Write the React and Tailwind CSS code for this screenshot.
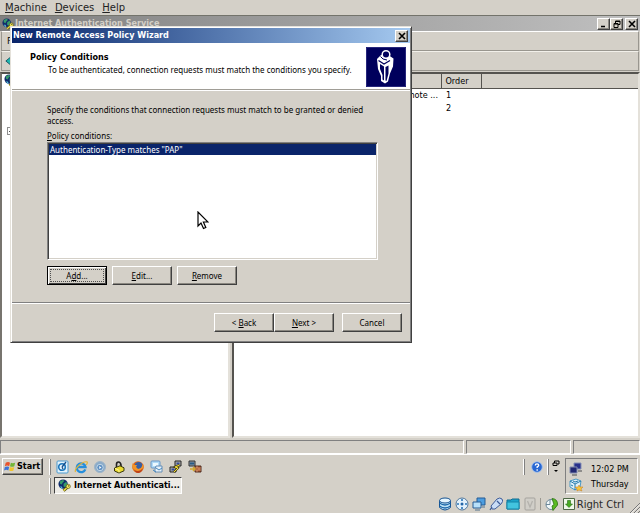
import React from "react";

const raised = "border border-t-white border-l-white border-r-[#404040] border-b-[#404040] shadow-[inset_-1px_-1px_0_#8a8780]";
const uiFont = "font-['DejaVu_Sans_Condensed','DejaVu_Sans',sans-serif]";
const dialogFont = "font-['Noto_Sans',sans-serif]";

function Icon({ children, className = "size-[14px]" }) {
  return (
    <svg viewBox="0 0 14 14" className={`${className} shrink-0`} aria-hidden="true">
      {children}
    </svg>
  );
}

function GlobeKey({ className }) {
  return (
    <Icon className={className}>
      <circle cx="5.5" cy="5.5" r="5" fill="#102a6c" />
      <path d="M2 2.5 5 1l2 1-2 2-1 2-2-1zM6 5l3-2 1 3-2 3-2-1z" fill="#35996b" />
      <path d="M2 8l2 0 1 2-1 .5z" fill="#54c2d8" />
      <path d="M6 12.5 10 9" stroke="#4a4300" strokeWidth="3" />
      <path d="M6 12.5 10 9" stroke="#e8dc4c" strokeWidth="1.6" />
      <circle cx="11" cy="8" r="2.3" fill="#f3e75e" stroke="#5a5210" strokeWidth=".7" />
      <circle cx="11.4" cy="7.5" r=".7" fill="#5a5210" />
    </Icon>
  );
}

function CloseGlyph() {
  return (
    <svg viewBox="0 0 8 8" className="size-2" aria-hidden="true">
      <path d="M1 1l6 6M7 1L1 7" stroke="#000" strokeWidth="1.6" />
    </svg>
  );
}

function TitleButton({ label, children }) {
  return (
    <button aria-label={label} className={`flex h-3 w-[13px] items-center justify-center bg-[#d4d0c8] ${raised}`}>
      {children}
    </button>
  );
}

function DialogButton({ children, focused }) {
  return (
    <button
      className={
        focused
          ? "h-[19px] w-[60px] border border-black bg-[#d4d0c8] p-px shadow-[inset_1px_1px_0_#fff,inset_-1px_-1px_0_#404040]"
          : `h-[19px] w-[60px] bg-[#d4d0c8] ${raised}`
      }
    >
      {focused ? (
        <span className="mx-px flex h-[13px] items-center justify-center border border-dotted border-[#505050]">{children}</span>
      ) : (
        children
      )}
    </button>
  );
}

function MenuBar() {
  return (
    <nav className="flex h-[15px] shrink-0 items-center gap-2 px-[5px] font-['DejaVu_Sans',sans-serif] text-[10px] leading-[15px] text-[#222]">
      <button><u>M</u>achine</button>
      <button><u>D</u>evices</button>
      <button><u>H</u>elp</button>
    </nav>
  );
}

function ServiceWindow() {
  return (
    <section className="flex flex-1 flex-col">
      <header className="flex h-4 items-center border-t border-[#73736b] bg-linear-to-r from-[#808080] to-[#c0c0c0] pr-[2px] pl-[2px] font-['DejaVu_Sans_Condensed','DejaVu_Sans',sans-serif] text-[9px] font-bold text-[#d4d0c8]">
        <GlobeKey className="size-3" />
        <h1 className="flex-1 pl-px leading-[15px]">Internet Authentication Service</h1>
        <div className="flex">
          <TitleButton label="Minimize">
            <svg viewBox="0 0 8 8" className="size-2"><path d="M1 6.5h4" stroke="#000" strokeWidth="1.5" /></svg>
          </TitleButton>
          <TitleButton label="Restore">
            <svg viewBox="0 0 8 8" className="size-2"><path d="M2.5 3V1h4.5v3.5H5M2.5 1.5H7M1 3.5h4v4H1zM1 4h4" fill="none" stroke="#000" /></svg>
          </TitleButton>
          <div className="ml-[2px] flex"><TitleButton label="Close"><CloseGlyph /></TitleButton></div>
        </div>
      </header>
      <div className={`mx-px flex h-5 items-center border border-[#99968f] border-t-white pl-[5px] ${dialogFont} text-[9px]`}>
        <button className="w-1 overflow-hidden">F</button>
      </div>
      <div className="mx-px flex h-5 items-center border border-t-[#f2f0ea] border-[#99968f] pl-[3px]">
        <button aria-label="Back" className="flex">
          <Icon className="size-3"><path d="M1 7l6-5v3h6v4H7v3z" fill="#20b8b0" stroke="#124a5c" /></Icon>
        </button>
      </div>
      <div className="flex flex-1 pt-px">
        <div className="w-[230px] shrink-0 border-2 border-t-[#55534f] border-r-[#e4e1da] border-b-[#e4e1da] border-l-[#77746e] bg-white">
          <GlobeKey className="ml-[2px] size-[13px]" />
          <div className="mt-10 ml-[5px] flex size-2 items-center justify-center border border-[#909090]">
            <span className="h-px w-1 bg-[#505050]" />
          </div>
        </div>
        <div className="ml-[2px] flex-1 border-2 border-t-[#55534f] border-r-[#e4e1da] border-b-[#e4e1da] border-l-[#55534f] bg-white">
          <table className={`w-full border-collapse text-left text-[9px] ${uiFont}`}>
            <thead>
              <tr className="h-[14px] border-b border-[#55534f] bg-[#d4d0c8]">
                <th className="w-[207px] border-r border-[#55534f] p-0 pl-1 font-normal leading-3">Name</th>
                <th className="w-10 border-r border-[#55534f] p-0 pl-1 font-normal leading-3">Order</th>
                <th className="p-0" />
              </tr>
            </thead>
            <tbody>
              <tr className="h-[14px]">
                <td className="p-0 pr-[3px] text-right leading-[13px] whitespace-nowrap">Connections to Microsoft Routing and Remote ...</td>
                <td className="p-0 pl-[5px] leading-[13px]">1</td>
                <td />
              </tr>
              <tr className="h-[13px]">
                <td className="p-0" />
                <td className="p-0 pl-[5px] leading-[13px]">2</td>
                <td />
              </tr>
            </tbody>
          </table>
        </div>
      </div>
      <footer className="flex h-4 gap-[2px] pt-[2px]">
        <div className="flex-1 border border-t-[#808080] border-l-[#808080] border-r-white border-b-white" />
        <div className="w-[105px] border border-t-[#808080] border-l-[#808080] border-r-white border-b-white" />
        <div className="w-[67px] border border-t-[#808080] border-l-[#808080] border-r-white border-b-white" />
      </footer>
    </section>
  );
}

function Wizard() {
  return (
    <section
      role="dialog"
      aria-labelledby="wizard-title"
      className={`absolute top-[26px] left-[10px] w-[402px] border border-t-[#e4e1da] border-l-[#e4e1da] border-r-[#404040] border-b-[#404040] bg-[#d4d0c8] p-px shadow-[inset_1px_1px_0_#fff,inset_-1px_-1px_0_#808080] ${dialogFont} text-[8px] leading-[11px] text-black`}
    >
      <header className="flex h-[15px] items-center bg-linear-to-r from-[#0a246a] to-[#a6caf0] pr-[2px] pl-px text-white">
        <h2 id="wizard-title" className="flex-1 font-['DejaVu_Sans_Condensed','DejaVu_Sans',sans-serif] text-[9px] font-bold">New Remote Access Policy Wizard</h2>
        <TitleButton label="Close"><CloseGlyph /></TitleButton>
      </header>
      <div className="flex h-[47px] items-start justify-between border-b border-[#a09d96] bg-white pt-1 pr-1 pl-[18px]">
        <div className="pt-[5px]">
          <h3 className="font-['DejaVu_Sans_Condensed','DejaVu_Sans',sans-serif] text-[9px] font-bold">Policy Conditions</h3>
          <p className="pt-px pl-[18px] whitespace-nowrap">To be authenticated, connection requests must match the conditions you specify.</p>
        </div>
        <svg viewBox="0 0 40 40" className="size-10 shrink-0" aria-hidden="true">
          <path d="M0 0h40v40H0z" fill="#00005c" />
          <path d="M.5.5h39v39H.5z" fill="none" stroke="#27277c" />
          <path d="M15 8 11 12l1 10 3 7v5l4 2.500 3-2 2-8 3-7 .5-8-4.500-3z" fill="#fff" />
          <circle cx="20" cy="7.500" r="3.800" fill="#00005c" stroke="#fff" strokeWidth="1.500" />
          <path d="M12.500 13.500l5.500 3.500 6-3.500" fill="none" stroke="#00005c" strokeWidth="1.300" />
          <path d="M14 17l4 2.500v14l-1.500-1V28L14 22zM19.500 20l3-1.500v8l-2 7.500-1-.5z" fill="#00005c" />
          <path d="M14.500 9.500 17 12l4 1" fill="none" stroke="#00005c" />
        </svg>
      </div>
      <div className="border-t border-white px-[35px] pt-[13px]">
        <p className="w-[330px]">Specify the conditions that connection requests must match to be granted or denied access.</p>
        <p id="conditions-label" className="pt-1"><u>P</u>olicy conditions:</p>
        <ul
          role="listbox"
          aria-labelledby="conditions-label"
          className="mt-px h-[118px] w-[331px] border border-t-[#808080] border-l-[#808080] border-r-white border-b-white bg-white shadow-[inset_1px_1px_0_#404040,inset_-1px_-1px_0_#d4d0c8] p-px"
        >
          <li role="option" aria-selected="true" className="bg-[#0a246a] pl-px text-white">Authentication-Type matches "PAP"</li>
        </ul>
        <div className="flex gap-[5px] pt-[6px]">
          <DialogButton focused><span>A<u>d</u>d...</span></DialogButton>
          <DialogButton><u>E</u>dit...</DialogButton>
          <DialogButton><u>R</u>emove</DialogButton>
        </div>
      </div>
      <div className="mt-[17px] flex justify-end border-t border-[#808080] pr-2 pb-[9px] shadow-[inset_0_1px_0_#fff]">
        <div className="flex gap-2 pt-[10px]">
          <div className="flex"><DialogButton>&lt; <u>B</u>ack</DialogButton><DialogButton><u>N</u>ext &gt;</DialogButton></div>
          <DialogButton>Cancel</DialogButton>
        </div>
      </div>
    </section>
  );
}

const quickLaunch = [
  ["Outlook Express", (
    <>
      <rect x="2" y="1" width="11" height="12" rx="1" fill="#e4f3fc" stroke="#4b9ad0" />
      <circle cx="7" cy="7" r="3.3" fill="none" stroke="#1c76bb" strokeWidth="1.6" />
      <path d="M7 7 11 2M7 7l1 2" stroke="#174f8c" strokeWidth="1.3" />
    </>
  )],
  ["Internet Explorer", (
    <>
      <path d="M11.3 9.3A4.4 4.4 0 1 1 11.5 7H4" fill="none" stroke="#268edb" strokeWidth="2.3" />
      <path d="M1.5 12C0 9 8 1 13 1.800c.8.8 0 2.200-.7 3.200" fill="none" stroke="#e2b436" strokeWidth="1.2" />
    </>
  )],
  ["Media Player", (
    <>
      <circle cx="7" cy="7" r="5.5" fill="#8aabc9" stroke="#9db4c8" />
      <circle cx="7" cy="7.5" r="3.2" fill="#5d8fc2" stroke="#c3d8e8" />
      <path d="M6.3 6v3l2.2-1.5z" fill="#fff" />
    </>
  )],
  ["Lock", (
    <>
      <path d="M4.5 7V4.5q0-2.5 2-2.5T9 5v3" fill="none" stroke="#222" strokeWidth="1.6" />
      <path d="M2.500 8 8 5.800l4 2v3L7 13l-4.500-2z" fill="#eadb32" stroke="#38350b" />
      <path d="M3 8.300l4 2v2" stroke="#fff59a" fill="none" />
    </>
  )],
  ["Firefox", (
    <>
      <circle cx="7" cy="7" r="5.8" fill="#d8651c" />
      <circle cx="7.600" cy="5.600" r="3.700" fill="#365fa5" />
      <path d="M1.500 3 3 5l3 0-1 2 2 2 3-1 2-4c2 5-2 9-6 8.500S1 8 1.500 3z" fill="#f39528" />
      <path d="M2 8c2 4 7 4 10 0-1 4-3 5-5 5s-4-2-5-5z" fill="#bd421a" />
    </>
  )],
  ["Remote Desktop", (
    <>
      <rect x="1" y="1" width="9" height="7" rx="1" fill="#b2dbf7" stroke="#6b97c5" />
      <path d="M3 3h5v3H3z" fill="#edf9ff" />
      <path d="M6 6h6v6H5V9z" fill="#e6f1fa" stroke="#668eb6" />
      <path d="M6 8l3 2 3-2M3 10l3 2" stroke="#4688be" fill="none" />
    </>
  )],
  ["PuTTY", (
    <>
      <path d="M6 1h6v5H6zM1 7h6v5H1z" fill="#aaa" stroke="#252525" />
      <path d="M7.500 2.500h3v2h-3zM2.500 8.500h3v2h-3z" fill="#344b99" />
      <path d="M10.500 5 6 7l3 1-4 4" fill="none" stroke="#4b430a" strokeWidth="2" />
      <path d="M10.500 5 6 7l3 1-4 4" fill="none" stroke="#f4df35" />
    </>
  )],
  ["Network", (
    <>
      <path d="M1 1h6v5H1z" fill="#8997a9" stroke="#333" />
      <path d="M2 2.500h4v2H2z" fill="#275a85" />
      <path d="M7 6h6v6H7z" fill="#a6512c" stroke="#4e2d20" />
      <path d="M7 8h6M7 10h6M9 6v2m2 0v2m-2 0v2" stroke="#e0a47b" strokeWidth=".7" />
      <path d="M2 9h5m-2-2 2 2-2 2" fill="none" stroke="#d2a72e" strokeWidth="1.500" />
    </>
  )],
];

function Grip() {
  return <span className="h-4 w-[2px] border-r border-l border-r-[#808080] border-l-white" />;
}

function Taskbar() {
  return (
    <section className={`flex h-[41px] shrink-0 items-start border-t border-white pt-[3px] pr-[2px] ${uiFont}`}>
      <button className={`ml-[2px] flex h-[17px] w-[41px] items-center gap-px bg-[#d4d0c8] pl-px text-[9px] font-bold ${raised}`}>
        <Icon className="size-3">
          <path d="M2 2q3-1.500 5 0L6 6q-2-1.400-5 0z" fill="#e8532b" />
          <path d="M8 2q2 1 5 0l-1 4q-3 1.400-5 0z" fill="#72b536" />
          <path d="M1 7q3-1.400 5 0l-1 4q-2-1.400-5 0z" fill="#3f73d5" />
          <path d="M7 7q2 1.200 5 0l-1 4q-3 1.400-5 0z" fill="#f2c52d" />
        </Icon>
        Start
      </button>
      <div className="ml-[6px] flex flex-col gap-[2px]">
        <div className="flex h-[17px] items-center gap-1">
          <Grip />
          <div className="flex gap-[5px]">
            {quickLaunch.map(([name, art]) => (
              <button key={name} aria-label={name} className="w-[14px]"><Icon>{art}</Icon></button>
            ))}
          </div>
        </div>
        <div className="flex h-[17px] items-center gap-[3px]">
          <Grip />
          <button className="flex h-[17px] w-[128px] items-center gap-[3px] border border-t-[#404040] border-l-[#404040] border-r-white border-b-white bg-[#edebe6] pl-[3px] text-[9px] font-bold whitespace-nowrap">
            <GlobeKey className="size-[13px]" />
            Internet Authenticati...
          </button>
        </div>
      </div>
      <div className="ml-auto flex items-start">
        <div className="flex h-[18px] items-center gap-[6px]">
          <Grip />
          <button aria-label="Help">
            <Icon className="size-3">
              <circle cx="7" cy="7" r="6.2" fill="#2867d2" stroke="#a4c1ee" />
              <path d="M5 5.3q0-2 2-2t2 1.800Q9 6.300 7.200 7v1.300M7.200 9.700v1.600" fill="none" stroke="#fff" strokeWidth="1.600" />
            </Icon>
          </button>
        </div>
        <div className="ml-[4px] flex h-[18px] items-center gap-[3px]">
          <Grip />
          <button aria-label="Show desktop toolbar">
            <svg viewBox="0 0 8 14" className="h-[14px] w-2">
              <path d="M2.500 3V1H7v3H5.500M1 3h4v2.500H1z" fill="none" stroke="#000" />
              <path d="M2 10h4l-2 2z" />
            </svg>
          </button>
        </div>
        <div className="ml-[5px] flex h-9 w-[73px] gap-2 border border-t-[#808080] border-l-[#808080] border-r-white border-b-white pt-[3px] pl-[3px] text-[9px]">
          <div className="flex flex-col gap-[2px]">
            <Icon>
              <path d="M5 1h7v6H5z" fill="#29308b" stroke="#8690b6" />
              <path d="M1 5h7v6H1z" fill="#222872" stroke="#818aae" />
              <path d="M3 13h5M9 9h4" stroke="#777" strokeWidth="1.500" />
            </Icon>
            <Icon>
              <path d="m7 1 5 2-1 6-5 3-5-3V3z" fill="#deeff8" stroke="#4b9bc6" />
              <path d="m1 3 5 3 6-3M6 6v6M4 3l2 1 3-1M2 7l2 1" fill="none" stroke="#257bae" />
              <path d="m10 7 1 2h3l-2 2 1 2-3-1-2 1V11L6 9h3z" fill="#f7c43d" stroke="#c67e20" strokeWidth=".5" />
            </Icon>
          </div>
          <div className="leading-[15px]"><time className="block">12:02 PM</time><span>Thursday</span></div>
        </div>
      </div>
    </section>
  );
}

const machineIcons = [
  ["Hard disks", (
    <>
      <path d="M1.500 3.500v7q5.500 5 11 0v-7" fill="#bde3f6" stroke="#155291" />
      <ellipse cx="7" cy="3.500" rx="5.500" ry="2.500" fill="#e5f6ff" stroke="#155291" />
      <path d="M1.500 6q5.500 4 11 0M1.500 9q5.500 4 11 0" fill="none" stroke="#1b67aa" strokeWidth="1.400" />
    </>
  )],
  ["Optical drive", (
    <>
      <circle cx="7" cy="7" r="6" fill="#e2f1fc" stroke="#52779a" />
      <circle cx="7" cy="7" r="1.500" fill="#2465a7" />
      <path d="M7 2v2M7 10v2M2 7h2M10 7h2" stroke="#2875b8" strokeWidth="1.600" />
    </>
  )],
  ["Network adapters", (
    <>
      <path d="M5 1h8v7H5z" fill="#4c9de0" stroke="#275d95" />
      <path d="M1 5h8v6H1z" fill="#b8e0fa" stroke="#275d95" />
      <path d="M3 13h5M10 10h3" stroke="#55728c" />
    </>
  )],
  ["USB devices", (
    <>
      <path d="M2 9 8 2q3-2 5 0t-1 5L6 12H3z" fill="#c9dcf6" stroke="#3e5c98" />
      <path d="M3 10l-2 3M8 4l3 3" stroke="#3e5c98" strokeWidth="1.300" />
    </>
  )],
  ["Shared folders", (
    <>
      <path d="M1 3h4l1-1h7v10H1z" fill="#1ba3c9" stroke="#126c91" />
      <path d="M1 5h12v7H1z" fill="#42c4df" stroke="#1586a9" />
    </>
  )],
  ["Virtualization", (
    <>
      <rect x="2" y="1" width="10" height="12" rx="1" fill="#d0cec8" stroke="#a5a39e" />
      <path d="M4.500 4 7 10l2.500-6" fill="none" stroke="#b4b2ad" strokeWidth="1.300" />
    </>
  )],
];

function MachineStatus() {
  return (
    <footer className="relative flex h-[18px] shrink-0 items-center justify-end pr-[16px] font-['DejaVu_Sans',sans-serif] text-[10px] text-[#292929]">
      <div className="flex items-center gap-[3px]">
        {machineIcons.map(([name, art]) => (
          <button key={name} aria-label={name}><Icon>{art}</Icon></button>
        ))}
      </div>
      <span className="mr-1 ml-[3px] h-3 w-px bg-[#9b9890]" />
      <button aria-label="Mouse integration">
        <Icon>
          <circle cx="6" cy="7.500" r="5" fill="#f0f7f9" stroke="#6c8799" />
          <path d="M5 2.500v5H1" stroke="#6c8799" fill="none" />
          <path d="M7 1.500q6 .5 5.500 6.500L8 13.500 7 9l2-1.500z" fill="#5bbb24" stroke="#287112" strokeWidth=".8" />
        </Icon>
      </button>
      <span className="mr-px ml-[3px] flex">
        <Icon>
          <path d="M1.500 1.500h11v11h-11z" fill="#eff8e8" stroke="#4e6845" />
          <path d="M5.500 3.500h3V7h2L7 10.500 3.500 7h2z" fill="#48ab20" stroke="#246c13" strokeWidth=".6" />
        </Icon>
      </span>
      <span>Right Ctrl</span>
      <svg viewBox="0 0 10 10" className="absolute right-0 bottom-0 size-[10px]" aria-hidden="true">
        <path d="M0 10 10 0M4 10l6-6M8 10l2-2" stroke="#777" />
        <path d="M1.300 10 10 1.300M5.300 10 10 5.300" stroke="#fff" strokeWidth=".7" />
      </svg>
    </footer>
  );
}

export default function App() {
  return (
    <main className="relative flex min-h-screen w-full flex-col overflow-hidden bg-[#d4d0c8] text-black">
      <MenuBar />
      <ServiceWindow />
      <Taskbar />
      <MachineStatus />
      <Wizard />
      <svg viewBox="0 0 12 19" className="absolute top-[211px] left-[197px] h-[19px] w-3" aria-hidden="true">
        <path d="M1 1v14l3-3 2.500 5.500 2.300-1L6.400 11H11z" fill="#fff" stroke="#000" strokeWidth="1.200" />
      </svg>
    </main>
  );
}
